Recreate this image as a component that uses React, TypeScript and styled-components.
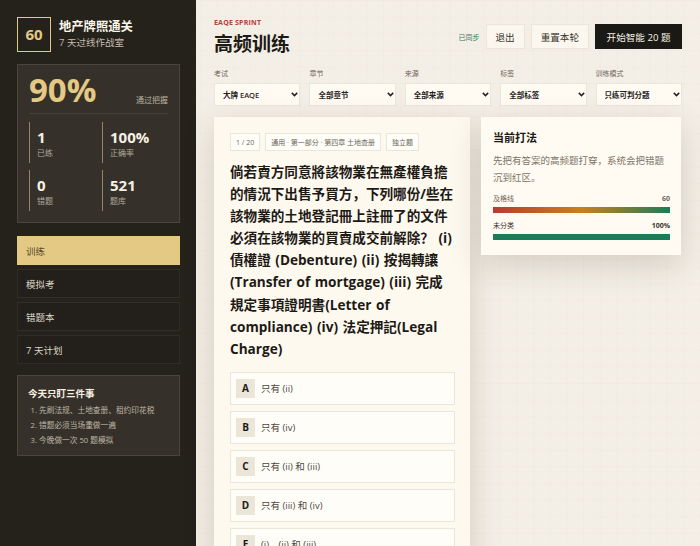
import styled, { createGlobalStyle } from 'styled-components'

const FONT = `"Open Sans", "Noto Sans", "Noto Sans CJK SC", sans-serif`
const CHEVRON =
  "url(\"data:image/svg+xml,%3Csvg xmlns='http://www.w3.org/2000/svg' width='7' height='5' viewBox='0 0 7 5'%3E%3Cpath d='M.8.9l2.7 2.7L6.2.9' fill='none' stroke='%23222' stroke-width='1.5'/%3E%3C/svg%3E\")"

const GlobalStyle = createGlobalStyle`
  html, body {
    margin: 0;
    height: 100%;
    overflow: hidden;
    background: #f4efe6;
    font-family: ${FONT};
  }
  * { box-sizing: border-box; }
`

const stats = [
  { value: '1', label: '已练' },
  { value: '100%', label: '正确率' },
  { value: '0', label: '错题' },
  { value: '521', label: '题库' },
]
const navItems = ['训练', '模拟考', '错题本', '7 天计划']
const filters = [
  { label: '考试', value: '大牌 EAQE' },
  { label: '章节', value: '全部章节' },
  { label: '来源', value: '全部来源' },
  { label: '标签', value: '全部标签' },
  { label: '训练模式', value: '只练可判分题' },
]
const options = [
  { key: 'A', text: '只有 (ii)' },
  { key: 'B', text: '只有 (iv)' },
  { key: 'C', text: '只有 (ii) 和 (iii)' },
  { key: 'D', text: '只有 (iii) 和 (iv)' },
  { key: 'E', text: '(i)、(ii) 和 (iii)' },
]

const App = () => {
  return (
    <StyledPage>
      <GlobalStyle />
      <StyledSidebar>
        <StyledBrand>
          <StyledBrandScore>60</StyledBrandScore>
          <div>
            <StyledBrandTitle>地产牌照通关</StyledBrandTitle>
            <StyledBrandSub>7 天过线作战室</StyledBrandSub>
          </div>
        </StyledBrand>

        <StyledScorePanel>
          <StyledScoreRow>
            <StyledPercent>90%</StyledPercent>
            <StyledPercentLabel>通过把握</StyledPercentLabel>
          </StyledScoreRow>
          <StyledStatGrid>
            {stats.map(stat => (
              <StyledStat key={stat.label}>
                <StyledStatValue>{stat.value}</StyledStatValue>
                <StyledStatLabel>{stat.label}</StyledStatLabel>
              </StyledStat>
            ))}
          </StyledStatGrid>
        </StyledScorePanel>

        <StyledNav>
          {navItems.map((item, index) => (
            <StyledNavItem key={item} $active={index === 0}>
              {item}
            </StyledNavItem>
          ))}
        </StyledNav>

        <StyledTips>
          <StyledTipsTitle>今天只盯三件事</StyledTipsTitle>
          <StyledTipsList>
            <li>先刷法规、土地查册、租约印花税</li>
            <li>错题必须当场重做一遍</li>
            <li>今晚做一次 50 题模拟</li>
          </StyledTipsList>
        </StyledTips>
      </StyledSidebar>

      <StyledMain>
        <StyledHeader>
          <div>
            <StyledEyebrow>EAQE SPRINT</StyledEyebrow>
            <StyledTitle>高频训练</StyledTitle>
          </div>
          <StyledActions>
            <StyledSynced>已同步</StyledSynced>
            <StyledButton>退出</StyledButton>
            <StyledButton>重置本轮</StyledButton>
            <StyledButton $primary>开始智能 20 题</StyledButton>
          </StyledActions>
        </StyledHeader>

        <StyledFilters>
          {filters.map(filter => (
            <StyledField key={filter.label}>
              <span>{filter.label}</span>
              <StyledSelect defaultValue={filter.value}>
                <option>{filter.value}</option>
              </StyledSelect>
            </StyledField>
          ))}
        </StyledFilters>

        <StyledContent>
          <StyledQuestionCard>
            <StyledTags>
              <StyledTag>1 / 20</StyledTag>
              <StyledTag>通用 · 第一部分 · 第四章 土地查册</StyledTag>
              <StyledTag>独立题</StyledTag>
            </StyledTags>
            <StyledQuestion>
              倘若賣方同意將該物業在無產權負擔的情況下出售予買方，下列哪份/些在該物業的土地登記冊上註冊了的文件必須在該物業的買賣成交前解除？ (i) 債權證 (Debenture) (ii) 按揭轉讓 (Transfer of mortgage) (iii) 完成規定事項證明書(Letter of compliance) (iv) 法定押記(Legal Charge)
            </StyledQuestion>
            <StyledOptions>
              {options.map(option => (
                <StyledOption key={option.key}>
                  <StyledOptionKey>{option.key}</StyledOptionKey>
                  <span>{option.text}</span>
                </StyledOption>
              ))}
            </StyledOptions>
          </StyledQuestionCard>

          <StyledSideCard>
            <StyledSideTitle>当前打法</StyledSideTitle>
            <StyledSideText>先把有答案的高频题打穿，系统会把错题沉到红区。</StyledSideText>
            <StyledMeterHead>
              <span>及格线</span>
              <b>60</b>
            </StyledMeterHead>
            <StyledMeter $gradient />
            <StyledMeterHead $strong>
              <span>未分类</span>
              <b>100%</b>
            </StyledMeterHead>
            <StyledMeter />
          </StyledSideCard>
        </StyledContent>
      </StyledMain>
    </StyledPage>
  )
}

export default App

const StyledPage = styled.div`
  display: flex;
  height: 546px;
  overflow: hidden;
  background-color: #f4efe6;
  background-image:
    linear-gradient(rgba(70, 60, 40, 0.014) 1px, transparent 1px),
    linear-gradient(90deg, rgba(70, 60, 40, 0.014) 1px, transparent 1px);
  background-size: 16.67px 16.67px;
`
const StyledSidebar = styled.aside`
  width: 196px;
  flex: none;
  padding: 17px 16px 0 17px;
  background: #25221c;
  color: #f7f1e3;
`
const StyledBrand = styled.div`
  display: flex;
  align-items: center;
  gap: 8px;
  height: 34px;
`
const StyledBrandScore = styled.div`
  width: 34px;
  height: 35px;
  flex: none;
  display: flex;
  align-items: center;
  justify-content: center;
  border: 1px solid #e3c983;
  color: #e3c983;
  font-size: 15px;
  font-weight: 700;
`
const StyledBrandTitle = styled.div`
  font-size: 12.3px;
  line-height: 18px;
  font-weight: 700;
  color: #fbf6ea;
`
const StyledBrandSub = styled.div`
  font-size: 9.5px;
  line-height: 14px;
  color: #c4bdae;
`
const StyledScorePanel = styled.section`
  margin-top: 13px;
  height: 159px;
  padding: 6px 11px 0;
  border: 1px solid #4a463c;
  background: #35312a;
`
const StyledScoreRow = styled.div`
  display: flex;
  align-items: flex-end;
  justify-content: space-between;
  height: 38px;
  margin-bottom: 4px;
`
const StyledPercent = styled.div`
  font-size: 33px;
  line-height: 38px;
  font-weight: 700;
  color: #e3c983;
`
const StyledPercentLabel = styled.div`
  margin-bottom: 3px;
  font-size: 8px;
  line-height: 12px;
  color: #b8b1a2;
`
const StyledStatGrid = styled.div`
  display: grid;
  grid-template-columns: 73px 1fr;
  row-gap: 7px;
  padding-top: 8px;
  border-top: 1px solid #45413a;
`
const StyledStat = styled.div`
  height: 41px;
  padding-left: 7px;
  border-left: 1px solid #8f8767;
`
const StyledStatValue = styled.div`
  padding-top: 6px;
  font-size: 15px;
  line-height: 18px;
  font-weight: 700;
  color: #f7f1e3;
`
const StyledStatLabel = styled.div`
  font-size: 8px;
  line-height: 13px;
  color: #b0a99a;
`
const StyledNav = styled.nav`
  display: flex;
  flex-direction: column;
  gap: 4px;
  margin-top: 13px;
`
const StyledNavItem = styled.div<{ $active?: boolean }>`
  height: 29px;
  padding-left: 8px;
  display: flex;
  align-items: center;
  font-size: 9.5px;
  border: 1px solid ${({ $active }) => ($active ? '#e3c983' : '#302c26')};
  background: ${({ $active }) => ($active ? '#e3c983' : '#231f1a')};
  color: ${({ $active }) => ($active ? '#5b4d2c' : '#ded8c9')};
`
const StyledTips = styled.section`
  margin-top: 11px;
  height: 81px;
  padding: 11px 10px;
  border: 1px solid #4a463c;
  background: #35312a;
`
const StyledTipsTitle = styled.div`
  font-size: 9.5px;
  line-height: 14px;
  font-weight: 700;
  color: #f7f1e3;
`
const StyledTipsList = styled.ol`
  margin: 2px 0 0;
  padding: 0 0 0 11px;
  font-size: 7.7px;
  line-height: 15px;
  color: #bdb6a7;
`
const StyledMain = styled.main`
  flex: 1;
  min-width: 0;
  padding: 18px 18px 0;
`
const StyledHeader = styled.header`
  display: flex;
  justify-content: space-between;
  align-items: flex-start;
`
const StyledEyebrow = styled.div`
  font-size: 7px;
  line-height: 10px;
  font-weight: 700;
  letter-spacing: 0.2px;
  color: #b5403a;
`
const StyledTitle = styled.h1`
  margin: 3px 0 0;
  font-size: 19px;
  line-height: 27px;
  font-weight: 700;
  color: #1d1a16;
`
const StyledActions = styled.div`
  display: flex;
  align-items: center;
  gap: 6px;
  margin-top: 6px;
`
const StyledSynced = styled.span`
  font-size: 7px;
  color: #2f7a5b;
`
const StyledButton = styled.button<{ $primary?: boolean }>`
  height: 25px;
  padding: 0 ${({ $primary }) => ($primary ? '10.5px' : '9px')};
  border: 1px solid ${({ $primary }) => ($primary ? '#1b1916' : '#ebe6da')};
  border-radius: 0;
  background: ${({ $primary }) => ($primary ? '#1b1916' : '#fbf7ee')};
  color: ${({ $primary }) => ($primary ? '#f7f1e3' : '#38332c')};
  font-family: ${FONT};
  font-size: 9.6px;
`
const StyledFilters = styled.div`
  display: grid;
  grid-template-columns: repeat(5, 1fr);
  gap: 9px;
  margin-top: 11px;
`
const StyledField = styled.label`
  display: flex;
  flex-direction: column;
  gap: 4px;
  font-size: 7px;
  line-height: 10px;
  color: #6e675b;
`
const StyledSelect = styled.select`
  appearance: none;
  width: 100%;
  height: 23px;
  padding: 0 10px 0 8px;
  border: 1px solid #ebe6da;
  border-radius: 0;
  background: #fffbf2 ${CHEVRON} no-repeat right 1px center;
  color: #26221c;
  font-family: ${FONT};
  font-size: 7.5px;
  font-weight: 600;
`
const StyledContent = styled.div`
  display: grid;
  grid-template-columns: 256px 200px;
  gap: 11px;
  align-items: start;
  margin-top: 11px;
`
const StyledQuestionCard = styled.section`
  height: 520px;
  padding: 16px 15px 0 16px;
  background: #fdf9ef;
  box-shadow: 0 10px 30px rgba(50, 40, 20, 0.16);
`
const StyledTags = styled.div`
  display: flex;
  gap: 5px;
`
const StyledTag = styled.span`
  height: 18px;
  padding: 0 5px;
  display: flex;
  align-items: center;
  border: 1px solid #ebe6da;
  background: #fffdf8;
  font-size: 7px;
  color: #6e675b;
`
const StyledQuestion = styled.p`
  margin: 10px 0 0;
  font-size: 13.6px;
  line-height: 22.1px;
  font-weight: 700;
  word-spacing: 1px;
  color: #1d1a16;
`
const StyledOptions = styled.div`
  display: flex;
  flex-direction: column;
  gap: 6px;
  margin-top: 12px;
`
const StyledOption = styled.div`
  height: 33px;
  padding: 0 5px;
  display: flex;
  align-items: center;
  gap: 6px;
  border: 1px solid #ebe6da;
  background: #fffdf8;
  font-size: 9.5px;
  color: #4d473d;
`
const StyledOptionKey = styled.span`
  width: 19px;
  height: 19px;
  display: flex;
  align-items: center;
  justify-content: center;
  background: #ece6d8;
  font-size: 10px;
  font-weight: 700;
  color: #1d1a16;
`
const StyledSideCard = styled.aside`
  height: 138px;
  padding: 13px 11px 0 12px;
  background: #fffbf2;
  box-shadow: 0 10px 30px rgba(50, 40, 20, 0.16);
`
const StyledSideTitle = styled.h2`
  margin: 0;
  font-size: 11px;
  line-height: 15px;
  font-weight: 700;
  color: #1d1a16;
`
const StyledSideText = styled.p`
  margin: 8px 0 0;
  font-size: 9.5px;
  line-height: 16.5px;
  color: #7b7468;
`
const StyledMeterHead = styled.div<{ $strong?: boolean }>`
  display: flex;
  justify-content: space-between;
  margin-top: 7px;
  font-size: 7px;
  line-height: 11px;
  color: ${({ $strong }) => ($strong ? '#38332c' : '#6e675b')};
`
const StyledMeter = styled.div<{ $gradient?: boolean }>`
  height: 6px;
  margin: 3px 0 4.5px;
  background: ${({ $gradient }) =>
    $gradient ? 'linear-gradient(90deg, #b93a35, #c9801c 50%, #1f7a58)' : '#1f7a58'};
`
